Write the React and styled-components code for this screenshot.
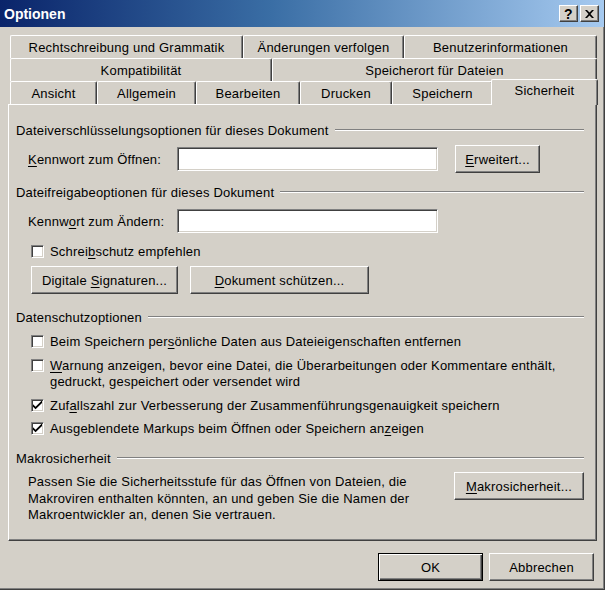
import React from 'react';
import styled, { createGlobalStyle, css } from 'styled-components';

const face = '#d4d0c8';
const shadow = '#808080';
const darkShadow = '#404040';

const GlobalStyle = createGlobalStyle`
  html, body {
    margin: 0;
    padding: 0;
    background: ${face};
  }
  body {
    font-family: "Liberation Sans", Arial, sans-serif;
    font-size: 13px;
    letter-spacing: 0.2px;
    color: #000;
  }
`;

const Window = styled.div`
  width: 605px;
  height: 590px;
  box-sizing: border-box;
  background: ${face};
  border-right: 1px solid ${darkShadow};
  border-bottom: 1px solid ${darkShadow};
  box-shadow: inset -1px -1px 0 ${shadow};
  display: flex;
  flex-direction: column;
  overflow: hidden;
`;

const TitleBar = styled.div`
  height: 27px;
  flex: 0 0 27px;
  display: flex;
  align-items: center;
  justify-content: space-between;
  padding: 0 5px 0 4px;
  background: linear-gradient(to right, #0a246a 0%, #3a6ea5 45%, #a6caf0 100%);
`;

const Title = styled.span`
  color: #fff;
  font-weight: bold;
  font-size: 14px;
  letter-spacing: 0;
`;

const Caps = styled.div`
  display: flex;
  gap: 2px;
`;

const CapButton = styled.div`
  width: 19px;
  height: 17px;
  box-sizing: border-box;
  background: ${face};
  border-top: 1px solid #fff;
  border-left: 1px solid #fff;
  border-right: 1px solid ${darkShadow};
  border-bottom: 1px solid ${darkShadow};
  box-shadow: inset -1px -1px 0 ${shadow};
  display: flex;
  align-items: center;
  justify-content: center;
  font-weight: bold;
  font-size: 14px;
  line-height: 1;
`;

const Body = styled.div`
  flex: 1;
  display: flex;
  flex-direction: column;
  padding: 8px 7px 0 8px;
`;

const TabStrip = styled.div`
  display: flex;
  flex-direction: column;
  padding: 0 1px 0 2px;
`;

const TabRow = styled.div`
  display: flex;
  height: 23px;
`;

const Tab = styled.div`
  flex: 0 0 ${p => p.$w}px;
  box-sizing: border-box;
  height: 23px;
  display: flex;
  align-items: center;
  justify-content: center;
  padding-top: 1px;
  border-top: 1px solid #fff;
  border-left: 1px solid #fff;
  border-right: 1px solid ${darkShadow};
  box-shadow: inset -1px 0 0 ${shadow};
  border-top-left-radius: 2px;
  border-top-right-radius: 2px;
  white-space: nowrap;
  background: ${face};
  ${p => p.$active && css`
    position: relative;
    z-index: 2;
    height: 26px;
    margin: -2px -2px -1px -2px;
    flex-basis: ${p.$w + 3}px;
    align-items: flex-start;
    padding-top: 3px;
  `}
`;

const Panel = styled.div`
  height: 437px;
  box-sizing: border-box;
  border-top: 1px solid #fff;
  border-left: 1px solid #fff;
  border-right: 1px solid ${darkShadow};
  border-bottom: 1px solid ${darkShadow};
  box-shadow: inset -1px -1px 0 ${shadow};
  padding: 17px 12px 0 7px;
  display: flex;
  flex-direction: column;
`;

const GroupHead = styled.div`
  display: flex;
  align-items: center;
  height: 16px;
  margin-top: ${p => p.$mt || 0}px;
  white-space: nowrap;

  &::after {
    content: '';
    flex: 1;
    margin-left: 6px;
    height: 0;
    border-top: 1px solid ${shadow};
    border-bottom: 1px solid #fff;
  }
`;

const FieldRow = styled.div`
  display: flex;
  align-items: center;
  height: 28px;
  margin-top: ${p => p.$mt || 0}px;
  padding-left: 12px;
`;

const Label = styled.span`
  flex: 0 0 149px;
  white-space: nowrap;
`;

const TextInput = styled.div`
  width: 261px;
  height: 24px;
  box-sizing: border-box;
  background: #fff;
  border-top: 1px solid ${shadow};
  border-left: 1px solid ${shadow};
  border-right: 1px solid #fff;
  border-bottom: 1px solid #fff;
  box-shadow: inset 1px 1px 0 ${darkShadow}, inset -1px -1px 0 ${face};
`;

const Button = styled.div`
  width: ${p => p.$w}px;
  height: 28px;
  box-sizing: border-box;
  margin-left: ${p => p.$ml || 0}px;
  background: ${face};
  border-top: 1px solid #fff;
  border-left: 1px solid #fff;
  border-right: 1px solid ${darkShadow};
  border-bottom: 1px solid ${darkShadow};
  box-shadow: inset -1px -1px 0 ${shadow};
  display: flex;
  align-items: center;
  justify-content: center;
  white-space: nowrap;
  flex-shrink: 0;
  ${p => p.$default && css`
    border: 1px solid #000;
    box-shadow: inset 1px 1px 0 #fff, inset -1px -1px 0 ${darkShadow}, inset -2px -2px 0 ${shadow};
  `}
`;

const ButtonRow = styled.div`
  display: flex;
  gap: 12px;
  margin-top: ${p => p.$mt || 0}px;
  padding-left: 15px;
`;

const CheckRow = styled.div`
  display: flex;
  align-items: flex-start;
  margin-top: ${p => p.$mt || 0}px;
  padding-left: 15px;
  line-height: 16px;
`;

const Box = styled.div`
  flex: 0 0 13px;
  width: 13px;
  height: 13px;
  box-sizing: border-box;
  margin: 1px 6px 0 0;
  background: #fff;
  border-top: 1px solid ${shadow};
  border-left: 1px solid ${shadow};
  border-right: 1px solid #fff;
  border-bottom: 1px solid #fff;
  box-shadow: inset 1px 1px 0 ${darkShadow}, inset -1px -1px 0 ${face};
  display: flex;
  align-items: center;
  justify-content: center;
`;

const MacroRow = styled.div`
  display: flex;
  align-items: flex-start;
  justify-content: space-between;
  margin-top: 6px;
  padding-left: 12px;
`;

const Para = styled.p`
  margin: 0;
  padding-top: 2px;
  line-height: 16.5px;
  width: 390px;
`;

const Footer = styled.div`
  display: flex;
  justify-content: flex-end;
  gap: 6px;
  margin-top: 12px;
  padding-right: 3px;
`;

const U = styled.u`
  text-decoration: underline;
  text-underline-offset: 2px;
`;

const Check = ({ on }) => (
  <Box>
    {on && (
      <svg width="9" height="9" viewBox="0 0 7 7">
        <path d="M0 2.5 L0 4.5 L2 6.5 L7 1.5 L7 -0.5 L2 4.5 Z" fill="#000" />
      </svg>
    )}
  </Box>
);

const Group = ({ children, mt }) => <GroupHead $mt={mt}>{children}</GroupHead>;

const rows = [
  [['Rechtschreibung und Grammatik', 233], ['Änderungen verfolgen', 161], ['Benutzerinformationen', 193]],
  [['Kompatibilität', 262], ['Speicherort für Dateien', 325]],
  [['Ansicht', 87], ['Allgemein', 99], ['Bearbeiten', 104], ['Drucken', 92], ['Speichern', 101], ['Sicherheit', 104]],
];

export default function App() {
  return (
    <>
      <GlobalStyle />
      <Window>
        <TitleBar>
          <Title>Optionen</Title>
          <Caps>
            <CapButton>?</CapButton>
            <CapButton>
              <svg width="9" height="8" viewBox="0 0 9 8">
                <path d="M0 0 H2 L4.5 2.6 L7 0 H9 L5.5 4 L9 8 H7 L4.5 5.4 L2 8 H0 L3.5 4 Z" fill="#000" />
              </svg>
            </CapButton>
          </Caps>
        </TitleBar>
        <Body>
          <TabStrip>
            {rows.map((row, i) => (
              <TabRow key={i}>
                {row.map(([name, w]) => (
                  <Tab key={name} $w={w} $active={name === 'Sicherheit'}>{name}</Tab>
                ))}
              </TabRow>
            ))}
          </TabStrip>
          <Panel>
            <Group>Dateiverschlüsselungsoptionen für dieses Dokument</Group>
            <FieldRow $mt={7}>
              <Label><U>K</U>ennwort zum Öffnen:</Label>
              <TextInput />
              <Button $w={85} $ml={17}><span><U>E</U>rweitert...</span></Button>
            </FieldRow>

            <Group mt={11}>Dateifreigabeoptionen für dieses Dokument</Group>
            <FieldRow $mt={7}>
              <Label>Kennw<U>o</U>rt zum Ändern:</Label>
              <TextInput />
            </FieldRow>
            <CheckRow $mt={9}>
              <Check />
              <span>Schrei<U>b</U>schutz empfehlen</span>
            </CheckRow>
            <ButtonRow $mt={6}>
              <Button $w={147}><span>Digitale <U>S</U>ignaturen...</span></Button>
              <Button $w={179}><span><U>D</U>okument schützen...</span></Button>
            </ButtonRow>

            <Group mt={15}>Datenschutzoptionen</Group>
            <CheckRow $mt={9}>
              <Check />
              <span>Beim Speichern per<U>s</U>önliche Daten aus Dateieigenschaften entfernen</span>
            </CheckRow>
            <CheckRow $mt={8}>
              <Check />
              <span>
                <U>W</U>arnung anzeigen, bevor eine Datei, die Überarbeitungen oder Kommentare enthält,
                <br />gedruckt, gespeichert oder versendet wird
              </span>
            </CheckRow>
            <CheckRow $mt={8}>
              <Check on />
              <span>Zuf<U>a</U>llszahl zur Verbesserung der Zusammenführungsgenauigkeit speichern</span>
            </CheckRow>
            <CheckRow $mt={7}>
              <Check on />
              <span>Ausgeblendete Markups beim Öffnen oder Speichern an<U>z</U>eigen</span>
            </CheckRow>

            <Group mt={13}>Makrosicherheit</Group>
            <MacroRow>
              <Para>
                Passen Sie die Sicherheitsstufe für das Öffnen von Dateien, die
                <br />Makroviren enthalten könnten, an und geben Sie die Namen der
                <br />Makroentwickler an, denen Sie vertrauen.
              </Para>
              <Button $w={130}><span><U>M</U>akrosicherheit...</span></Button>
            </MacroRow>
          </Panel>
          <Footer>
            <Button $w={105} $default>OK</Button>
            <Button $w={105}>Abbrechen</Button>
          </Footer>
        </Body>
      </Window>
    </>
  );
}
